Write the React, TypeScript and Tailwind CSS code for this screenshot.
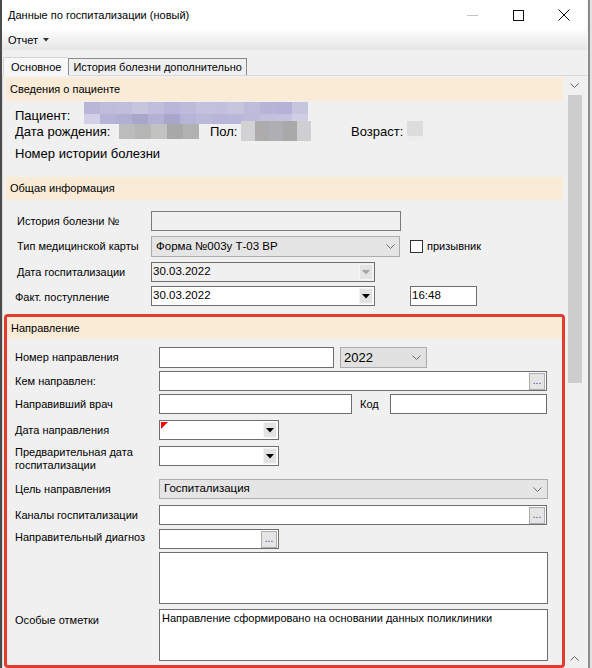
import React from "react";

const F = "font-['Liberation_Sans',Arial,sans-serif]";

function DropBtn({ disabled }: { disabled?: boolean }) {
  return (
    <div className="w-[14px] h-[16px] mr-[1px] flex items-center justify-center bg-[#e3e3e3] border border-[#f5f5f5]">
      <svg width="8" height="5" viewBox="0 0 8 5">
        <path d="M0 0h8L4 4.5z" fill={disabled ? "#a3a3a3" : "#000"} />
      </svg>
    </div>
  );
}

function Chevron({ color = "#6b6b6b" }: { color?: string }) {
  return (
    <svg width="9" height="5" viewBox="0 0 9 5">
      <path d="M0.5 0.5L4.5 4.5L8.5 0.5" fill="none" stroke={color} strokeWidth="1" />
    </svg>
  );
}

function Dots() {
  return (
    <div className="w-[16px] h-[17px] mr-[1px] flex items-end justify-center bg-[#e5e5e5] border border-[#adadad] text-[10px] leading-[12px] text-[#1c3f8c] pb-[2px]">
      ...
    </div>
  );
}

function DateBox({ w, value, disabled, flag }: { w: string; value?: string; disabled?: boolean; flag?: boolean }) {
  return (
    <div
      className={`relative h-[20px] ${w} border border-[#6e6e6e] ${disabled ? "bg-[#f0f0f0]" : "bg-white"} flex items-center justify-between`}
    >
      <span className="self-start pl-[1px] text-[11.5px] leading-[14px] pt-[1px] text-black">{value}</span>
      {flag && (
        <svg className="absolute left-[1px] top-[1px]" width="7" height="7" viewBox="0 0 7 7">
          <path d="M0 0h7L0 7z" fill="#ff0000" />
        </svg>
      )}
      <DropBtn disabled={disabled} />
    </div>
  );
}

function Header({ children }: { children: React.ReactNode }) {
  return (
    <div className="h-[23px] bg-[#faebd7] flex items-center pl-[4px] text-[11px] text-black">{children}</div>
  );
}

function Blur({ colors, w = 16 }: { colors: string[]; w?: number }) {
  return (
    <div className="flex">
      {colors.map((c, i) => (
        <div key={i} className="h-full" style={{ backgroundColor: c, width: w }} />
      ))}
    </div>
  );
}

export default function App() {
  return (
    <div className={`w-[592px] h-[668px] overflow-hidden flex bg-[#efefef] ${F}`}>
      <div className="w-[2px] bg-[#4b4b4b]" />
      <div className="w-[585px] flex flex-col bg-[#f0f0f0]">
        {/* title bar */}
        <div className="h-[30px] bg-white flex items-center shrink-0">
          <span className="pl-[6px] text-[11px] text-black">Данные по госпитализации (новый)</span>
          <div className="ml-auto flex items-center h-full">
            <div className="w-[46px] h-full flex items-center justify-center">
              <div className="w-[11px] h-[1px] bg-[#c4c4c4]" />
            </div>
            <div className="w-[46px] h-full flex items-center justify-center">
              <div className="w-[11px] h-[11px] border border-[#111]" />
            </div>
            <div className="w-[46px] h-full flex items-center justify-center">
              <svg width="12" height="12" viewBox="0 0 12 12">
                <path d="M0.5 0.5L11.5 11.5M11.5 0.5L0.5 11.5" stroke="#111" strokeWidth="1" />
              </svg>
            </div>
          </div>
        </div>

        {/* menu */}
        <div className="h-[20px] shrink-0 bg-gradient-to-b from-[#fcfcfc] to-[#e6e6e6] flex items-center pl-[6px] text-[11px] text-black gap-[5px]">
          <span>Отчет</span>
          <svg width="6" height="4" viewBox="0 0 6 4">
            <path d="M0 0h6L3 3.5z" fill="#333" />
          </svg>
        </div>

        {/* tabs */}
        <div className="h-[25px] shrink-0 flex items-end pl-[1px] text-[11px] text-black">
          <div className="h-[19px] px-[7px] flex items-center bg-[#f7f7f7] border-t border-l border-[#d4d4d4] relative top-[1px]">
            Основное
          </div>
          <div className="h-[17px] px-[4px] flex items-center bg-[#f0f0f0] border border-b-0 border-[#8a8a8a]">
            История болезни дополнительно
          </div>
        </div>

        {/* panel */}
        <div className="flex-1 flex border-t border-l border-[#d9d9d9] bg-[#f0f0f0] overflow-hidden">
          <div className="w-[563px] flex flex-col text-black">
            {/* patient */}
            <div className="mt-[2px] ml-[3px] mr-[3px]">
              <Header>Сведения о пациенте</Header>
            </div>
            <div className="flex h-[22px] mt-[1px] pl-[12px]">
              <span className="w-[69px] text-[13px] leading-[16px] mt-[6px]">Пациент:</span>
              <div className="flex flex-col w-[224px]">
                <div className="h-[12px] flex">
                  <Blur colors={["#b8b7d8", "#bdbcda", "#c0bfdb", "#c6c5dd", "#bfbedc", "#b9b7d9", "#bcbbd9", "#c3c2dc", "#c1c0dd", "#c6c5de", "#bdbcdb", "#b6b5d8", "#b4b3d7", "#c6c5de"]} />
                </div>
                <div className="h-[10px] flex">
                  <Blur colors={["#d1d0e6", "#b5b3d6", "#b1afd4", "#a9a6cc", "#b3b1d5", "#a8a6cc", "#b6b4d7", "#bcbadb", "#b7b5d8", "#b9b7d9", "#bdbbdb", "#c2c1dd", "#c4c3de", "#cfcee4"]} />
                </div>
              </div>
            </div>
            <div className="flex h-[17px] pl-[12px]">
              <span className="w-[104px] text-[13px] leading-[16px]">Дата рождения:</span>
              <div className="h-[15px] flex">
                <Blur colors={["#bcbcbc", "#b5b5b3", "#c1c3c0", "#a8a8a8", "#b1b1b1"]} />
              </div>
              <span className="ml-[11px] w-[31px] text-[13px] leading-[16px]">Пол:</span>
              <div className="h-[20px] -mt-[3px] flex">
                <Blur colors={["#d2d2d4", "#adabac", "#afaeb3", "#a9a9a9", "#cfcfd1"]} w={14} />
              </div>
              <span className="ml-[40px] w-[56px] text-[13px] leading-[16px]">Возраст:</span>
              <div className="w-[16px] flex flex-col -mt-[3px]">
                <div className="h-[16px] bg-[#dcdcdc]" />
                <div className="h-[6px] bg-[#ececec]" />
              </div>
            </div>
            <div className="mt-[5px] pl-[12px] text-[13px] leading-[16px]">Номер истории болезни</div>

            {/* general */}
            <div className="mt-[15px] ml-[3px] mr-[3px]">
              <Header>Общая информация</Header>
            </div>
            <div className="mt-[11px] flex items-center h-[20px] pl-[14px] text-[11px]">
              <span className="w-[134px]">История болезни №</span>
              <div className="w-[250px] h-[20px] border border-[#7a7a7a] bg-[#f0f0f0]" />
            </div>
            <div className="mt-[5px] flex items-center h-[21px] pl-[14px] text-[11px]">
              <span className="w-[134px]">Тип медицинской карты</span>
              <div className="w-[249px] h-[21px] border border-[#adadad] bg-[#e5e5e5] flex items-center justify-between pl-[4px] pr-[4px] text-[11.5px]">
                <span>Форма №003у Т-03 ВР</span>
                <Chevron />
              </div>
              <div className="ml-[10px] w-[13px] h-[13px] border border-[#333] bg-white" />
              <span className="ml-[4px]">призывник</span>
            </div>
            <div className="mt-[5px] flex items-center h-[20px] pl-[14px] text-[11px]">
              <span className="w-[134px]">Дата госпитализации</span>
              <DateBox w="w-[224px]" value="30.03.2022" disabled />
            </div>
            <div className="mt-[4px] flex items-center h-[20px] pl-[12px] text-[11px]">
              <span className="w-[136px] pt-[3px]">Факт. поступление</span>
              <DateBox w="w-[224px]" value="30.03.2022" />
              <div className="ml-[35px] w-[67px] h-[20px] border border-[#6e6e6e] bg-white text-[11.5px] leading-[14px] pl-[1px] pt-[1px]">
                16:48
              </div>
            </div>

            {/* referral */}
            <div className="mt-[8px] ml-[1px] w-[561px] border-[3px] border-[#e33b2e] rounded-[4px] flex flex-col pb-[4px] text-[11px]">
              <div className="h-[22px] bg-[#faebd7] flex items-center pl-[4px]">Направление</div>
              <div className="mt-[8px] flex items-center h-[21px] pl-[8px]">
                <span className="w-[144px]">Номер направления</span>
                <div className="w-[175px] h-[21px] border border-[#6e6e6e] bg-white" />
                <div className="ml-[6px] w-[87px] h-[21px] border border-[#acacac] bg-[#e1e1e1] flex items-center justify-between pl-[3px] pr-[5px] text-[13px]">
                  <span>2022</span>
                  <Chevron />
                </div>
              </div>
              <div className="mt-[3px] flex items-center h-[20px] pl-[8px]">
                <span className="w-[144px]">Кем направлен:</span>
                <div className="w-[388px] h-[20px] border border-[#6e6e6e] bg-white flex items-center justify-end">
                  <Dots />
                </div>
              </div>
              <div className="mt-[3px] flex items-center h-[20px] pl-[8px]">
                <span className="w-[144px]">Направивший врач</span>
                <div className="w-[193px] h-[20px] border border-[#6e6e6e] bg-white" />
                <span className="ml-[8px] w-[30px]">Код</span>
                <div className="w-[157px] h-[20px] border border-[#6e6e6e] bg-white" />
              </div>
              <div className="mt-[6px] flex items-center h-[20px] pl-[8px]">
                <span className="w-[144px]">Дата направления</span>
                <DateBox w="w-[120px]" flag />
              </div>
              <div className="mt-[6px] flex items-start h-[26px] pl-[8px]">
                <span className="w-[144px] leading-[13px]">
                  Предварительная дата
                  <br />
                  госпитализации
                </span>
                <DateBox w="w-[120px]" />
              </div>
              <div className="mt-[7px] flex items-center h-[20px] pl-[8px]">
                <span className="w-[144px]">Цель направления</span>
                <div className="w-[389px] h-[20px] border border-[#adadad] bg-[#e5e5e5] flex items-center justify-between pl-[4px] pr-[5px] text-[11.5px]">
                  <span>Госпитализация</span>
                  <Chevron />
                </div>
              </div>
              <div className="mt-[6px] flex items-center h-[20px] pl-[8px]">
                <span className="w-[144px]">Каналы госпитализации</span>
                <div className="w-[388px] h-[20px] border border-[#6e6e6e] bg-white flex items-center justify-end">
                  <Dots />
                </div>
              </div>
              <div className="mt-[4px] flex items-center h-[20px] pl-[8px]">
                <span className="w-[144px] -mt-[3px]">Направительный диагноз</span>
                <div className="w-[120px] h-[20px] border border-[#6e6e6e] bg-white flex items-center justify-end">
                  <Dots />
                </div>
              </div>
              <div className="mt-[3px] flex h-[52px] pl-[152px]">
                <div className="w-[389px] h-[52px] border border-[#6e6e6e] bg-white" />
              </div>
              <div className="mt-[5px] flex h-[52px] pl-[8px]">
                <span className="w-[144px] mt-[3px]">Особые отметки</span>
                <div className="w-[389px] h-[52px] border border-[#6e6e6e] bg-white pl-[2px] pt-[1px] leading-[15px]">
                  Направление сформировано на основании данных поликлиники
                </div>
              </div>
            </div>
          </div>

          {/* scrollbar */}
          <div className="w-[17px] flex flex-col items-center bg-[#f0f0f0]">
            <div className="h-[19px] flex items-center justify-center">
              <Chevron color="#606060" />
            </div>
            <div className="w-[14px] h-[288px] bg-[#cdcdcd]" />
            <div className="flex-1" />
            <div className="h-[19px] flex items-center justify-center rotate-180">
              <Chevron color="#606060" />
            </div>
          </div>
        </div>
      </div>
      <div className="flex-1 flex">
        <div className="w-[1px] bg-[#f4f4f4]" />
        <div className="w-[2px] bg-[#8a8a8a]" />
        <div className="flex-1 bg-[#e2e2e2]" />
      </div>
    </div>
  );
}
